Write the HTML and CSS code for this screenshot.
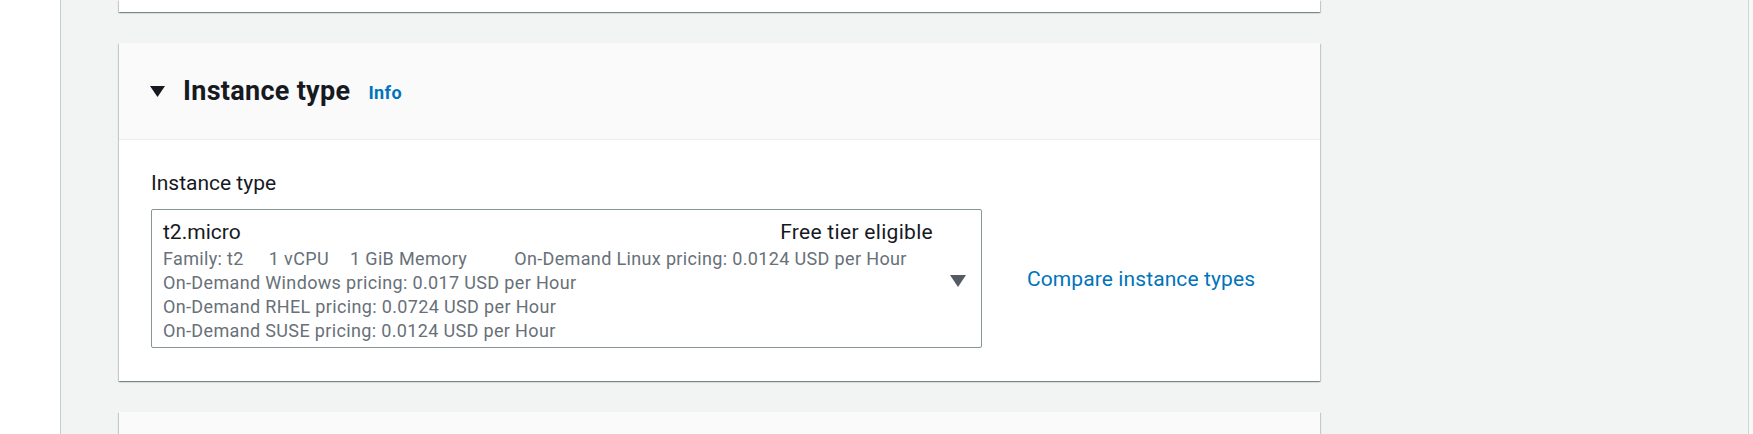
FILE: index.html
```html
<!DOCTYPE html>
<html lang="en">
<head>
<meta charset="utf-8">
<title>Instance type</title>
<link rel="stylesheet" href="styles.css">
</head>
<body>
<div class="page">
  <div class="nav-pane"></div>
  <main class="main">
    <div class="column">
      <div class="card card-prev"></div>
      <section class="card">
        <header class="card-header">
          <svg class="expand" width="15" height="11" viewBox="0 0 15 11"><polygon points="0,0 15,0 7.5,11" fill="#16191f"/></svg>
          <h2 class="title">Instance type</h2>
          <a class="info">Info</a>
        </header>
        <div class="card-body">
          <div class="label">Instance type</div>
          <div class="row">
            <div class="select">
              <div class="opt">
                <div class="opt-top">
                  <span class="opt-name">t2.micro</span>
                  <span class="opt-tag">Free tier eligible</span>
                </div>
                <div class="opt-desc">
                  <span class="t-family">Family: t2</span><span class="t-cpu">1 vCPU</span><span class="t-mem">1 GiB Memory</span><span>On-Demand Linux pricing: 0.0124 USD per Hour</span>
                </div>
                <div class="opt-desc">On-Demand Windows pricing: 0.017 USD per Hour</div>
                <div class="opt-desc">On-Demand RHEL pricing: 0.0724 USD per Hour</div>
                <div class="opt-desc">On-Demand SUSE pricing: 0.0124 USD per Hour</div>
              </div>
              <svg class="caret" width="16" height="12" viewBox="0 0 16 12"><polygon points="0,0 16,0 8,12" fill="#545b64"/></svg>
            </div>
            <a class="compare">Compare instance types</a>
          </div>
        </div>
      </section>
      <div class="card card-next"></div>
    </div>
  </main>
  <div class="edge"></div>
</div>
</body>
</html>
```

FILE: styles.css
```css
html, body {
  margin: 0;
  padding: 0;
  height: 100%;
  overflow: hidden;
}
body {
  font-family: Roboto, "Noto Sans", Arial, sans-serif;
  color: #16191f;
  background: #ffffff;
}
.page {
  display: flex;
  height: 434px;
}
.nav-pane {
  width: 60px;
  flex: none;
  background: #ffffff;
  border-right: 1px solid #c6cccd;
}
.main {
  flex: 1;
  background: #f2f3f3;
  padding-left: 58px;
  overflow: hidden;
}
.edge {
  width: 4px;
  flex: none;
  background: #f7f8f8;
  border-left: 1px solid #cfd4d5;
}
.column {
  width: 1201px;
  display: flex;
  flex-direction: column;
  gap: 31px;
}
.card {
  background: #ffffff;
  box-shadow: 0 1px 1px 0 rgba(0, 28, 36, 0.3), 1px 1px 1px 0 rgba(0, 28, 36, 0.15), -1px 1px 1px 0 rgba(0, 28, 36, 0.15);
}
.card-prev {
  height: 12px;
}
.card-next {
  height: 40px;
  background: #fafafa;
}
.card-header {
  box-sizing: border-box;
  height: 97px;
  background: #fafafa;
  border-bottom: 1px solid #eaeded;
  display: flex;
  align-items: center;
  padding: 0 0 0 31px;
}
.expand {
  flex: none;
  margin-top: 1px;
}
.title {
  margin: 0 0 0 18px;
  font-size: 27px;
  line-height: 36px;
  font-weight: 700;
  letter-spacing: 0.3px;
}
.info {
  margin-left: 18px;
  margin-top: 3px;
  font-size: 18px;
  font-weight: 700;
  letter-spacing: 0.4px;
  color: #0073bb;
}
.card-body {
  padding: 28px 32px 33px 32px;
}
.label {
  font-size: 21px;
  line-height: 30px;
  margin-bottom: 11px;
}
.row {
  display: flex;
  align-items: center;
  gap: 45px;
}
.select {
  width: 831px;
  box-sizing: border-box;
  border: 1px solid #879596;
  border-radius: 2px;
  display: flex;
  align-items: center;
  padding: 7px 15px 4px 11px;
}
.opt {
  flex: 1;
  margin-right: 17px;
}
.opt-top {
  display: flex;
  justify-content: space-between;
  font-size: 21px;
  line-height: 30px;
}
.opt-tag {
  letter-spacing: 0.3px;
}
.opt-desc {
  font-size: 18px;
  line-height: 24px;
  letter-spacing: 0.35px;
  color: #687078;
}
.t-family {
  margin-right: 25px;
}
.t-cpu {
  margin-right: 21px;
}
.t-mem {
  margin-right: 47px;
}
.caret {
  flex: none;
  margin-top: 2px;
}
.compare {
  font-size: 21px;
  letter-spacing: 0.1px;
  color: #0073bb;
}
```
